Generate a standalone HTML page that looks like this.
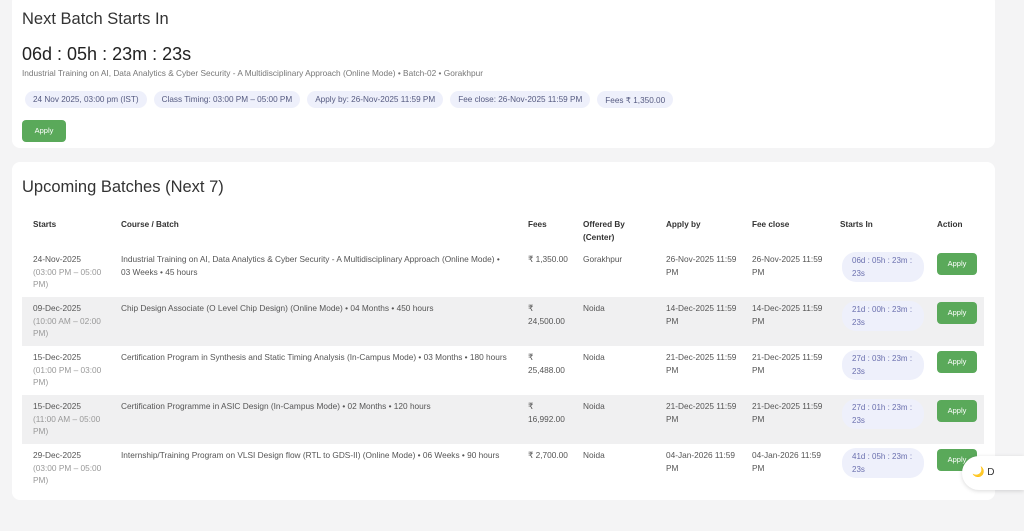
<!DOCTYPE html>
<html><head><meta charset="utf-8"><style>
*{margin:0;padding:0;box-sizing:border-box}
body{width:1024px;height:531px;background:#f4f4f5;font-family:"Liberation Sans",sans-serif;position:relative;overflow:hidden;color:#333}
.card{position:absolute;left:12px;width:983px;background:#fff;border-radius:8px}
h2{position:absolute;font-weight:400;font-size:16.5px;color:#333}
.cd{position:absolute;left:10px;top:50px;font-size:18px;color:#222}
.sub{position:absolute;left:10px;top:74px;font-size:8.3px;color:#777}
.chips{position:absolute;left:13px;top:97px;display:flex;gap:7px}
.chip{background:#eef0fb;color:#555a80;font-size:8.2px;border-radius:9px;padding:4px 8px;height:17px;white-space:nowrap}
.btn{position:absolute;background:#5aa95a;color:#fff;font-size:7.5px;border-radius:4px;text-align:center}
.t{position:absolute;font-size:8.3px;line-height:12.5px;color:#555;white-space:nowrap}
.th{position:absolute;font-size:8.2px;font-weight:bold;color:#333;line-height:13px;top:56px}
.row{position:absolute;left:10px;width:962px;height:49px}
.g{background:#f0f0f1}
.pill{position:absolute;left:820px;top:4px;width:82px;height:30px;border-radius:14px;background:#eef0fb;color:#6a6fae;font-size:8px;line-height:12.5px;padding:3px 0 0 10px}
.mut{color:#999}
</style></head><body>
<div class="card" style="top:-6px;height:154px">
<h2 style="left:10px;top:16px">Next Batch Starts In</h2>
<div class="cd">06d : 05h : 23m : 23s</div>
<div class="sub">Industrial Training on AI, Data Analytics &amp; Cyber Security - A Multidisciplinary Approach (Online Mode) • Batch-02 • Gorakhpur</div>
<div class="chips"><span class="chip">24 Nov 2025, 03:00 pm (IST)</span><span class="chip">Class Timing: 03:00 PM – 05:00 PM</span><span class="chip">Apply by: 26-Nov-2025 11:59 PM</span><span class="chip">Fee close: 26-Nov-2025 11:59 PM</span><span class="chip">Fees ₹ 1,350.00</span></div>
<div class="btn" style="left:10px;top:126px;width:44px;height:22px;line-height:22px">Apply</div>
</div>
<div class="card" style="top:162px;height:338px">
<h2 style="left:10px;top:16px">Upcoming Batches (Next 7)</h2>
<div class="th" style="left:21px">Starts</div>
<div class="th" style="left:109px">Course / Batch</div>
<div class="th" style="left:516px">Fees</div>
<div class="th" style="left:571px">Offered By<br>(Center)</div>
<div class="th" style="left:654px">Apply by</div>
<div class="th" style="left:740px">Fee close</div>
<div class="th" style="left:828px">Starts In</div>
<div class="th" style="left:925px">Action</div>

<div class="row" style="top:86px">
<div class="t" style="left:11px;top:5px">24-Nov-2025<br><span class="mut">(03:00 PM – 05:00<br>PM)</span></div>
<div class="t" style="left:99px;top:5px">Industrial Training on AI, Data Analytics &amp; Cyber Security - A Multidisciplinary Approach (Online Mode) •<br>03 Weeks • 45 hours</div>
<div class="t" style="left:506px;top:5px">₹ 1,350.00</div>
<div class="t" style="left:561px;top:5px">Gorakhpur</div>
<div class="t" style="left:644px;top:5px">26-Nov-2025 11:59<br>PM</div>
<div class="t" style="left:730px;top:5px">26-Nov-2025 11:59<br>PM</div>
<div class="pill">06d : 05h : 23m :<br>23s</div>
<div class="btn" style="left:915px;top:5px;width:40px;height:22px;line-height:22px">Apply</div>
</div>
<div class="row g" style="top:135px">
<div class="t" style="left:11px;top:5px">09-Dec-2025<br><span class="mut">(10:00 AM – 02:00<br>PM)</span></div>
<div class="t" style="left:99px;top:5px">Chip Design Associate (O Level Chip Design) (Online Mode) • 04 Months • 450 hours</div>
<div class="t" style="left:506px;top:5px">₹<br>24,500.00</div>
<div class="t" style="left:561px;top:5px">Noida</div>
<div class="t" style="left:644px;top:5px">14-Dec-2025 11:59<br>PM</div>
<div class="t" style="left:730px;top:5px">14-Dec-2025 11:59<br>PM</div>
<div class="pill">21d : 00h : 23m :<br>23s</div>
<div class="btn" style="left:915px;top:5px;width:40px;height:22px;line-height:22px">Apply</div>
</div>
<div class="row" style="top:184px">
<div class="t" style="left:11px;top:5px">15-Dec-2025<br><span class="mut">(01:00 PM – 03:00<br>PM)</span></div>
<div class="t" style="left:99px;top:5px">Certification Program in Synthesis and Static Timing Analysis (In-Campus Mode) • 03 Months • 180 hours</div>
<div class="t" style="left:506px;top:5px">₹<br>25,488.00</div>
<div class="t" style="left:561px;top:5px">Noida</div>
<div class="t" style="left:644px;top:5px">21-Dec-2025 11:59<br>PM</div>
<div class="t" style="left:730px;top:5px">21-Dec-2025 11:59<br>PM</div>
<div class="pill">27d : 03h : 23m :<br>23s</div>
<div class="btn" style="left:915px;top:5px;width:40px;height:22px;line-height:22px">Apply</div>
</div>
<div class="row g" style="top:233px">
<div class="t" style="left:11px;top:5px">15-Dec-2025<br><span class="mut">(11:00 AM – 05:00<br>PM)</span></div>
<div class="t" style="left:99px;top:5px">Certification Programme in ASIC Design (In-Campus Mode) • 02 Months • 120 hours</div>
<div class="t" style="left:506px;top:5px">₹<br>16,992.00</div>
<div class="t" style="left:561px;top:5px">Noida</div>
<div class="t" style="left:644px;top:5px">21-Dec-2025 11:59<br>PM</div>
<div class="t" style="left:730px;top:5px">21-Dec-2025 11:59<br>PM</div>
<div class="pill">27d : 01h : 23m :<br>23s</div>
<div class="btn" style="left:915px;top:5px;width:40px;height:22px;line-height:22px">Apply</div>
</div>
<div class="row" style="top:282px">
<div class="t" style="left:11px;top:5px">29-Dec-2025<br><span class="mut">(03:00 PM – 05:00<br>PM)</span></div>
<div class="t" style="left:99px;top:5px">Internship/Training Program on VLSI Design flow (RTL to GDS-II) (Online Mode) • 06 Weeks • 90 hours</div>
<div class="t" style="left:506px;top:5px">₹ 2,700.00</div>
<div class="t" style="left:561px;top:5px">Noida</div>
<div class="t" style="left:644px;top:5px">04-Jan-2026 11:59<br>PM</div>
<div class="t" style="left:730px;top:5px">04-Jan-2026 11:59<br>PM</div>
<div class="pill">41d : 05h : 23m :<br>23s</div>
<div class="btn" style="left:915px;top:5px;width:40px;height:22px;line-height:22px">Apply</div>
</div>
</div>
<div style="position:absolute;left:962px;top:456px;width:62px;height:34px;background:#fff;border-radius:17px 0 0 17px;box-shadow:0 1px 4px rgba(0,0,0,.15);font-size:10px;line-height:34px;padding-left:10px;color:#333"><span style="color:#d9a21b">🌙</span> D</div>
</body></html>
